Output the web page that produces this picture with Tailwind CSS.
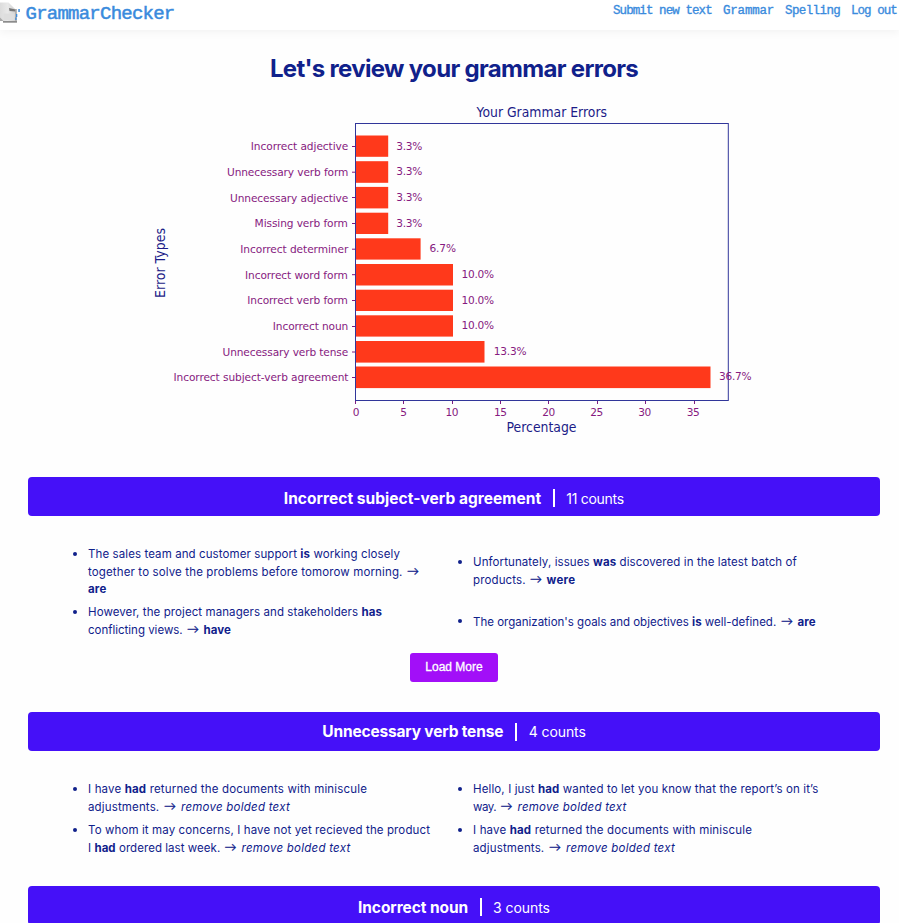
<!DOCTYPE html>
<html lang="en">
<head>
<meta charset="utf-8">
<title>GrammarChecker</title>
<script src="https://cdn.jsdelivr.net/npm/@tailwindcss/browser@4"></script>
</head>
<body class="h-[923px] overflow-hidden bg-[#fefefe] font-['Inter',sans-serif] text-[#10218b]">
<header class="flex h-[30px] items-start justify-between bg-white pr-[2px] font-['Liberation_Mono',monospace] text-[#3a8bdd] shadow-[0_2px_10px_rgba(0,0,0,0.05)]">
  <div class="flex items-start">
    <svg class="mt-[1px] h-[23px] w-[20px]" viewBox="0 0 20 23">
      <defs><linearGradient id="pg" x1="0" x2="1" y1="0" y2="0"><stop offset="0" stop-color="#dcdcdc"/><stop offset="0.5" stop-color="#e9e9e9"/><stop offset="1" stop-color="#cfcfcf"/></linearGradient></defs>
      <path d="M3 20h14v1.700H3z" fill="#8c8c8c"/>
      <path d="M0 1.500h8.500L15.500 8.500v11.500H3L0 18z" fill="url(#pg)"/>
      <path d="M0 16.500 3.500 20H0z" fill="#aaa"/>
      <path d="M9 7 15.500 8.500v2L9.500 10z" fill="#777"/>
      <path d="M3.500 12.500h11v6.500h-11z" fill="#dedede"/>
      <path d="M15.300 8v12h1.400V8z" fill="#999"/>
      <path d="M18.300 8h1.500v3h-1.500zM16 13h1.300v3H16zM15.300 16.500h1.200V19h-1.200z" fill="#3a8bdd"/>
    </svg>
    <a class="ml-[5.5px] mt-[1.5px] whitespace-nowrap text-[19px] leading-[24px] tracking-[-0.76px] [-webkit-text-stroke:0.5px_#3a8bdd]">GrammarChecker</a>
  </div>
  <nav class="flex gap-[11px] whitespace-nowrap pt-[1px] text-[12.5px] leading-[20px] [-webkit-text-stroke:0.35px_#3a8bdd]">
    <a class="w-[99px] tracking-[-0.92px]">Submit new text</a>
    <a class="w-[51px] tracking-[-0.2px]">Grammar</a>
    <a class="w-[55px] tracking-[-0.6px]">Spelling</a>
    <a class="w-[46px] tracking-[-0.95px]">Log out</a>
  </nav>
</header>
<main>
<h1 class="mt-[21px] pl-[9px] text-center text-[24px] font-bold leading-[36px] tracking-[-0.68px]">Let's review your grammar errors</h1>

<svg class="mt-[3px] block" width="899" height="387" viewBox="0 90 899 387" font-family="DejaVu Sans, sans-serif">
  <g fill="#ff391b">
    <rect x="355.5" y="135.500" width="32.700" height="21.300"/><rect x="355.5" y="161.200" width="32.700" height="21.600"/>
    <rect x="355.5" y="186.900" width="32.700" height="21.500"/><rect x="355.5" y="212.700" width="32.700" height="21.300"/>
    <rect x="355.5" y="238.300" width="65.100" height="21.300"/><rect x="355.5" y="264" width="97.500" height="21.500"/>
    <rect x="355.5" y="289.700" width="97.500" height="21.300"/><rect x="355.5" y="315.300" width="97.500" height="21.300"/>
    <rect x="355.5" y="341" width="129" height="21.600"/><rect x="355.5" y="366.500" width="355" height="21.600"/>
  </g>
  <rect x="355.500" y="123.500" width="372.800" height="277" fill="none" stroke="#31369a"/>
  <path d="M352 146.500h3M352 172.200h3M352 197.500h3M352 223.500h3M352 249.200h3M352 274.700h3M352 300.500h3M352 326.500h3M352 352h3M352 377.500h3M355.500 401v3M403.500 401v3M452.500 401v3M500.500 401v3M548.500 401v3M597.500 401v3M645.500 401v3M694.500 401v3" stroke="#7d1c80"/>
  <g fill="#861a80" font-size="10.600">
    <g text-anchor="end">
      <text x="348.300" y="150" textLength="97.500">Incorrect adjective</text>
      <text x="348.300" y="176" textLength="121.300">Unnecessary verb form</text>
      <text x="348.300" y="201.500" textLength="118.300">Unnecessary adjective</text>
      <text x="347.800" y="227.300" textLength="93.200">Missing verb form</text>
      <text x="348.300" y="252.800" textLength="108">Incorrect determiner</text>
      <text x="347.800" y="278.800" textLength="102.800">Incorrect word form</text>
      <text x="347.800" y="304.300" textLength="100.500">Incorrect verb form</text>
      <text x="348.300" y="330" textLength="75.500">Incorrect noun</text>
      <text x="348.300" y="355.800" textLength="125.800">Unnecessary verb tense</text>
      <text x="348.500" y="381.400" textLength="175">Incorrect subject-verb agreement</text>
    </g>
    <text x="396.300" y="149.500" textLength="26">3.3%</text>
    <text x="396.300" y="175.200" textLength="26">3.3%</text>
    <text x="396.300" y="200.700" textLength="26">3.3%</text>
    <text x="396.300" y="226.700" textLength="26">3.3%</text>
    <text x="429.500" y="252.200" textLength="26.500">6.7%</text>
    <text x="461.500" y="277.700" textLength="32.700">10.0%</text>
    <text x="461.500" y="303.700" textLength="32.700">10.0%</text>
    <text x="461.500" y="329.300" textLength="32.700">10.0%</text>
    <text x="493.800" y="355" textLength="32.700">13.3%</text>
    <text x="719" y="380.400" textLength="32.700">36.7%</text>
    <g text-anchor="middle">
      <text x="356" y="416">0</text><text x="403.500" y="416">5</text><text x="452" y="416" textLength="13">10</text><text x="500.500" y="416" textLength="13">15</text>
      <text x="548.700" y="416" textLength="13">20</text><text x="596.700" y="416" textLength="13">25</text><text x="644.700" y="416" textLength="13">30</text><text x="693.300" y="416" textLength="13">35</text>
    </g>
  </g>
  <g fill="#1c1c88" font-size="13.300">
    <text x="476.500" y="117" textLength="130.500" lengthAdjust="spacingAndGlyphs">Your Grammar Errors</text>
    <text x="506.500" y="432.400" textLength="70" lengthAdjust="spacingAndGlyphs">Percentage</text>
    <text transform="translate(165 298) rotate(-90)" textLength="70" lengthAdjust="spacingAndGlyphs">Error Types</text>
  </g>
</svg>

<section class="h-[235px]">
  <div class="ml-[28px] flex h-[39px] w-[852px] justify-center rounded-[4px] bg-[#4510f8] pt-[3px] text-white">
    <div class="flex h-[36px] items-center whitespace-nowrap"><h2 class="w-[258px] pt-[1px] text-[15.5px] font-bold tracking-[0.04px]">Incorrect subject-verb agreement</h2><i class="ml-[11px] mr-[11.500px] h-[18px] w-[2px] bg-white"></i><span class="w-[58px] text-[14px] tracking-[-0.29px]">11 counts</span></div>
  </div>
  <div class="ml-[88px] mt-[29px] grid w-[770px] grid-cols-[385px_385px] items-center gap-y-[6px] whitespace-nowrap text-[11.5px] leading-[18px]">
    <div class="relative">
      <i class="absolute -left-[15px] top-[7px] size-[4px] rounded-full bg-[#10218b]"></i>
      <p class="tracking-[0.095px]">The sales team and customer support <b>is</b> working closely</p>
      <p><span class="inline-block w-[319px] tracking-[0.135px]">together to solve the problems before tomorow morning. </span><span class="inline-block h-[18px] w-[16px] align-top font-['Lato'] text-[12px] leading-[16px] [-webkit-text-stroke:0.3px_#10218b]">→</span></p>
      <p class="leading-[16px] tracking-[0.15px]"><b>are</b></p>
    </div>
    <div class="relative">
      <i class="absolute -left-[15px] top-[7px] size-[4px] rounded-full bg-[#10218b]"></i>
      <p class="tracking-[0.097px]">Unfortunately, issues <b>was</b> discovered in the latest batch of</p>
      <p><span class="inline-block w-[57px] tracking-[0.13px]">products. </span><span class="inline-block h-[18px] w-[16.500px] align-top font-['Lato'] text-[12px] leading-[16px] [-webkit-text-stroke:0.3px_#10218b]">→</span><b class="tracking-[0.3px]">were</b></p>
    </div>
    <div class="relative">
      <i class="absolute -left-[15px] top-[7px] size-[4px] rounded-full bg-[#10218b]"></i>
      <p class="tracking-[0.088px]">However, the project managers and stakeholders <b>has</b></p>
      <p><span class="inline-block w-[99px] tracking-[-0.01px]">conflicting views. </span><span class="inline-block h-[18px] w-[16.500px] align-top font-['Lato'] text-[12px] leading-[16px] [-webkit-text-stroke:0.3px_#10218b]">→</span><b class="tracking-[0.08px]">have</b></p>
    </div>
    <div class="relative pt-[2px]">
      <i class="absolute -left-[15px] top-[8px] size-[4px] rounded-full bg-[#10218b]"></i>
      <p><span class="inline-block w-[308px]">The organization's goals and objectives <b>is</b> well-defined. </span><span class="inline-block h-[18px] w-[16.500px] align-top font-['Lato'] text-[12px] leading-[16px] [-webkit-text-stroke:0.3px_#10218b]">→</span><b class="tracking-[0.1px]">are</b></p>
    </div>
  </div>
  <div class="flex pl-[410px] pt-[14px]"><button class="h-[29px] w-[88px] rounded-[3px] bg-[#a20ff8] pb-[2px] font-['Liberation_Sans',sans-serif] text-[12px] text-white [-webkit-text-stroke:0.3px_white]">Load More</button></div>
</section>

<section class="h-[174px]">
  <div class="ml-[28px] flex h-[39px] w-[852px] items-center justify-center rounded-[4px] bg-[#4510f8] text-white">
    <div class="flex items-center whitespace-nowrap"><h2 class="w-[182px] text-[15.5px] font-bold tracking-[-0.17px]">Unnecessary verb tense</h2><i class="ml-[11px] mr-[11.500px] h-[18px] w-[2px] bg-white"></i><span class="w-[57px] text-[14px] tracking-[-0.1px]">4 counts</span></div>
  </div>
  <div class="ml-[88px] mt-[29px] grid w-[770px] grid-cols-[385px_385px] items-center gap-y-[5px] whitespace-nowrap text-[11.5px] leading-[18px]">
    <div class="relative">
      <i class="absolute -left-[15px] top-[7px] size-[4px] rounded-full bg-[#10218b]"></i>
      <p class="tracking-[0.16px]">I have <b>had</b> returned the documents with miniscule</p>
      <p><span class="inline-block w-[76px] tracking-[0.15px]">adjustments. </span><span class="inline-block h-[18px] w-[17px] align-top font-['Lato'] text-[12px] leading-[16px] [-webkit-text-stroke:0.3px_#10218b]">→</span><i class="tracking-[0.24px]">remove bolded text</i></p>
    </div>
    <div class="relative">
      <i class="absolute -left-[15px] top-[7px] size-[4px] rounded-full bg-[#10218b]"></i>
      <p class="tracking-[0.123px]">Hello, I just <b>had</b> wanted to let you know that the report’s on it’s</p>
      <p><span class="inline-block w-[27.500px] tracking-[-0.500px]">way. </span><span class="inline-block h-[18px] w-[17px] align-top font-['Lato'] text-[12px] leading-[16px] [-webkit-text-stroke:0.3px_#10218b]">→</span><i class="tracking-[0.24px]">remove bolded text</i></p>
    </div>
    <div class="relative">
      <i class="absolute -left-[15px] top-[7px] size-[4px] rounded-full bg-[#10218b]"></i>
      <p class="tracking-[0.113px]">To whom it may concerns, I have not yet recieved the product</p>
      <p><span class="inline-block w-[136.500px] tracking-[0.05px]">I <b>had</b> ordered last week. </span><span class="inline-block h-[18px] w-[17px] align-top font-['Lato'] text-[12px] leading-[16px] [-webkit-text-stroke:0.3px_#10218b]">→</span><i class="tracking-[0.24px]">remove bolded text</i></p>
    </div>
    <div class="relative">
      <i class="absolute -left-[15px] top-[7px] size-[4px] rounded-full bg-[#10218b]"></i>
      <p class="tracking-[0.16px]">I have <b>had</b> returned the documents with miniscule</p>
      <p><span class="inline-block w-[76px] tracking-[0.15px]">adjustments. </span><span class="inline-block h-[18px] w-[17px] align-top font-['Lato'] text-[12px] leading-[16px] [-webkit-text-stroke:0.3px_#10218b]">→</span><i class="tracking-[0.24px]">remove bolded text</i></p>
    </div>
  </div>
</section>

<section>
  <div class="ml-[28px] flex h-[39px] w-[852px] justify-center rounded-[4px] bg-[#4510f8] pt-[3px] text-white">
    <div class="flex h-[36px] items-center whitespace-nowrap"><h2 class="w-[110.500px] pt-[1px] text-[15.5px] font-bold tracking-[-0.08px]">Incorrect noun</h2><i class="ml-[11px] mr-[11.500px] h-[18px] w-[2px] bg-white"></i><span class="w-[57px] text-[14px] tracking-[-0.05px]">3 counts</span></div>
  </div>
</section>
</main>
</body>
</html>
